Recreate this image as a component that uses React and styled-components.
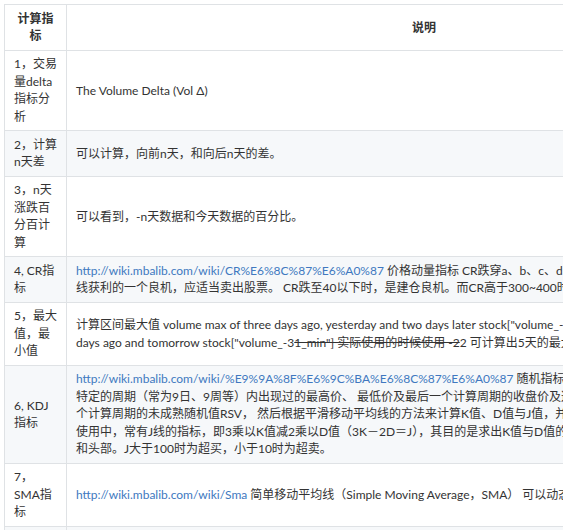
import React from 'react';
import styled, { createGlobalStyle } from 'styled-components';

const GlobalStyle = createGlobalStyle`
  html, body {
    margin: 0;
    padding: 0;
    overflow: hidden;
    background: #fff;
  }
  body {
    font-family: "Lato", "Noto Sans CJK SC", sans-serif;
    font-size: 12px;
    color: #333;
  }
`;

const Page = styled.div`
  padding: 4px 0 0 4px;
`;

const Clip = styled.div`
  width: 559px;
  overflow: hidden;
`;

const Table = styled.table`
  border-collapse: collapse;
  border-spacing: 0;
  width: 778px;
  table-layout: fixed;
`;

const Row = styled.tr`
  background: ${(p) => (p.$striped ? '#f6f8fa' : '#fff')};
`;

const Head = styled.th`
  border: 1px solid #dfe2e5;
  padding: 4.75px 9px;
  line-height: 17.5px;
  font-weight: bold;
  text-align: center;
  white-space: nowrap;
  color: #333;
`;

const Name = styled.td`
  border: 1px solid #dfe2e5;
  padding: 4.75px 9px;
  line-height: 17.5px;
  white-space: nowrap;
  vertical-align: middle;
`;

const Desc = styled.td`
  border: 1px solid #dfe2e5;
  padding: 4.75px 9px;
  line-height: 17.5px;
  white-space: nowrap;
  overflow: hidden;
  vertical-align: middle;
`;

const Link = styled.a`
  color: #4078c0;
  text-decoration: none;
`;

const Struck = styled.del`
  text-decoration: line-through;
`;

const rows = [
  {
    name: ['1，交易', '量delta', '指标分', '析'],
    desc: <>The Volume Delta (Vol Δ)</>,
  },
  {
    name: ['2，计算', 'n天差'],
    desc: <>可以计算，向前n天，和向后n天的差。</>,
  },
  {
    name: ['3，n天', '涨跌百', '分百计', '算'],
    desc: <>可以看到，-n天数据和今天数据的百分比。</>,
  },
  {
    name: ['4, CR指', '标'],
    desc: (
      <>
        <Link href="#">http://wiki.mbalib.com/wiki/CR%E6%8C%87%E6%A0%87</Link> 价格动量指标 CR跌穿a、b、c、d四条线，再由低点向上爬升160时，为短
        <br />
        线获利的一个良机，应适当卖出股票。 CR跌至40以下时，是建仓良机。而CR高于300~400时，应注意适当减仓。
      </>
    ),
  },
  {
    name: ['5，最大', '值，最', '小值'],
    desc: (
      <>
        计算区间最大值 volume max of three days ago, yesterday and two days later stock["volume_-3,2_max"] volume min between 3
        <br />
        days ago and tomorrow stock["volume_-3<Struck>1_min"] 实际使用的时候使用 -2</Struck>2 可计算出5天的最大，最小值。
      </>
    ),
  },
  {
    name: ['6, KDJ', '指标'],
    desc: (
      <>
        <Link href="#">http://wiki.mbalib.com/wiki/%E9%9A%8F%E6%9C%BA%E6%8C%87%E6%A0%87</Link> 随机指标(KDJ)一般是根据统计学的原理，通过一个
        <br />
        特定的周期（常为9日、9周等）内出现过的最高价、 最低价及最后一个计算周期的收盘价及这三者之间的比例关系，来计算最后一
        <br />
        个计算周期的未成熟随机值RSV， 然后根据平滑移动平均线的方法来计算K值、D值与J值，并绘成曲线图来研判股票走势。 在实际
        <br />
        使用中，常有J线的指标，即3乘以K值减2乘以D值（3K－2D＝J），其目的是求出K值与D值的最大乖离程度，以领先KD值找出底部
        <br />
        和头部。J大于100时为超买，小于10时为超卖。
      </>
    ),
  },
  {
    name: ['7，', 'SMA指', '标'],
    desc: (
      <>
        <Link href="#">http://wiki.mbalib.com/wiki/Sma</Link> 简单移动平均线（Simple Moving Average，SMA） 可以动态输入参数，获得几天的移动平均。
      </>
    ),
  },
  {
    name: ['8，', 'MACD指', '标'],
    desc: (
      <>
        <Link href="#">http://wiki.mbalib.com/wiki/MACD</Link> 平滑异同移动平均线(Moving Average Convergence Divergence，简称MACD指标)
      </>
    ),
  },
];

const Lines = ({ items }) =>
  items.map((t, i) => (
    <React.Fragment key={i}>
      {i > 0 && <br />}
      {t}
    </React.Fragment>
  ));

export default function App() {
  return (
    <Page>
      <GlobalStyle />
      <Clip>
        <Table>
          <colgroup>
            <col style={{ width: 62 }} />
            <col />
          </colgroup>
          <thead>
            <Row>
              <Head>
                计算指
                <br />
                标
              </Head>
              <Head>说明</Head>
            </Row>
          </thead>
          <tbody>
            {rows.map((r, i) => (
              <Row key={i} $striped={i % 2 === 1}>
                <Name>
                  <Lines items={r.name} />
                </Name>
                <Desc>{r.desc}</Desc>
              </Row>
            ))}
          </tbody>
        </Table>
      </Clip>
    </Page>
  );
}
